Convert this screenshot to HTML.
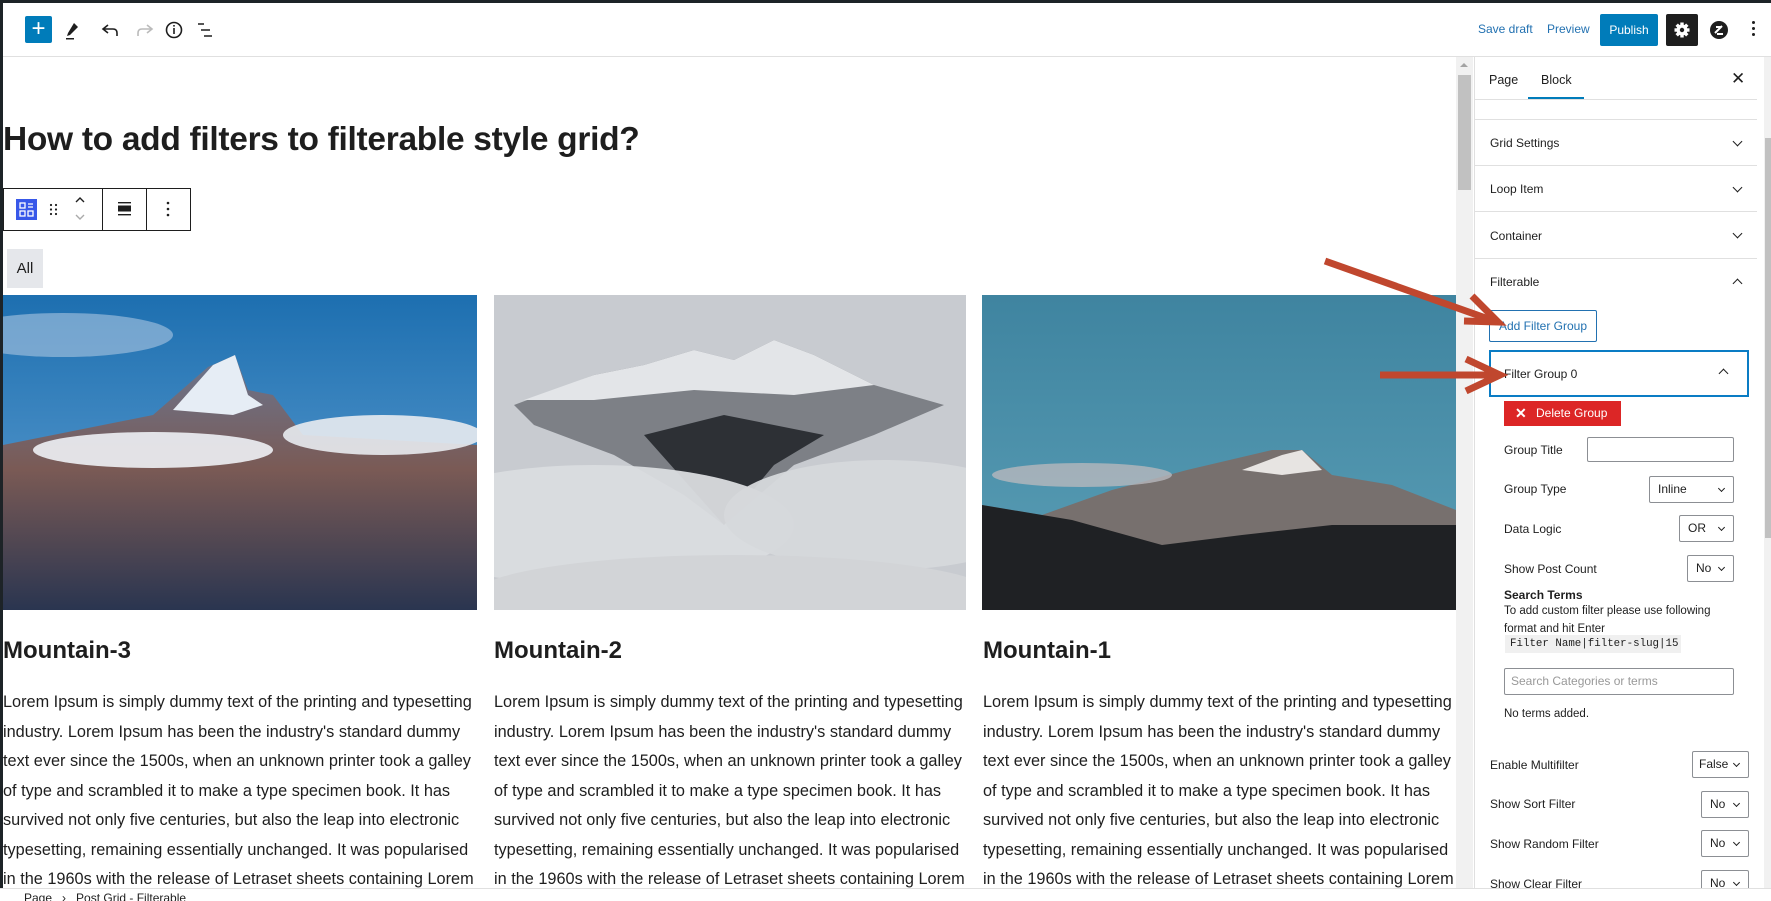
<!DOCTYPE html>
<html><head><meta charset="utf-8"><style>
*{box-sizing:border-box;margin:0;padding:0}
body{width:1771px;height:901px;overflow:hidden;background:#fff;font-family:"Liberation Sans",sans-serif;color:#1e1e1e;position:relative}
.a{position:absolute}
.top{left:0;top:0;width:1771px;height:3px;background:#1d2327}
.hdr{left:0;top:3px;width:1771px;height:54px;border-bottom:1px solid #e0e0e0;background:#fff}
.side{left:1474px;top:57px;width:290px;height:831px;border-left:1px solid #e0e0e0;background:#fff;font-size:12px}
.row{position:absolute;left:0;width:282px;border-top:1px solid #e0e0e0}
.lbl{position:absolute;font-size:12px;color:#1e1e1e;white-space:nowrap}
.sel{position:absolute;border:1px solid #8c8f94;border-radius:2px;background:#fff;font-size:12px;padding-left:8px;line-height:25px;height:27px}
.sel:after{content:"";position:absolute;right:9px;top:9px;width:4px;height:4px;border-right:1.5px solid #1e1e1e;border-bottom:1.5px solid #1e1e1e;transform:rotate(45deg)}
.chev{position:absolute;width:7px;height:7px;border-right:1.6px solid #1e1e1e;border-bottom:1.6px solid #1e1e1e;transform:rotate(45deg)}
.chevu{position:absolute;width:7px;height:7px;border-left:1.6px solid #1e1e1e;border-top:1.6px solid #1e1e1e;transform:rotate(45deg)}
.col p{font-size:16.3px;line-height:29.5px;white-space:nowrap;color:#1e1e1e}
.col h2{font-size:24px;font-weight:bold;margin:0}
</style></head><body>
<div class="a top"></div>
<div class="a hdr"></div>
<div class="a" style="left:25px;top:16px;width:27px;height:27px;background:#007cba;border-radius:2px;color:#fff;font-size:24px;line-height:26px;text-align:center">+</div>
<svg class="a" style="left:60px;top:16px" width="160" height="28" viewBox="0 0 160 28">
<path d="M14 7 L18 11 L10 19 L7 20 L8 17 Z" fill="#1e1e1e"/><rect x="6" y="22" width="8" height="1.5" fill="#1e1e1e"/>
<path d="M48 9 L43 13 L48 17 M43 13 H53 Q57 13 57 17 V20" fill="none" stroke="#1e1e1e" stroke-width="1.6"/>
<path d="M87 9 L92 13 L87 17 M92 13 H82 Q78 13 78 17 V20" fill="none" stroke="#bbb" stroke-width="1.6"/>
<circle cx="114" cy="14" r="7.5" fill="none" stroke="#1e1e1e" stroke-width="1.6"/><rect x="113.2" y="12" width="1.6" height="6" fill="#1e1e1e"/><rect x="113.2" y="9" width="1.6" height="1.6" fill="#1e1e1e"/>
<path d="M138 8 H144 M141 14 H150 M144 20 H152" stroke="#1e1e1e" stroke-width="1.6"/>
</svg>
<div class="a" style="left:1478px;top:22px;font-size:12px;color:#2271b1">Save draft</div>
<div class="a" style="left:1547px;top:22px;font-size:12px;color:#2271b1">Preview</div>
<div class="a" style="left:1600px;top:14px;width:58px;height:32px;background:#007cba;border-radius:2px;color:#fff;font-size:12px;line-height:32px;text-align:center">Publish</div>
<div class="a" style="left:1666px;top:14px;width:32px;height:32px;background:#1e1e1e;border-radius:2px"></div>
<svg class="a" style="left:1672px;top:20px" width="20" height="20" viewBox="0 0 20 20"><g fill="#fff"><circle cx="10" cy="10" r="5.5"/><rect x="8.3" y="2.5" width="3.4" height="15"/><rect x="2.5" y="8.3" width="15" height="3.4"/><rect x="8.3" y="2.5" width="3.4" height="15" transform="rotate(45 10 10)"/><rect x="8.3" y="2.5" width="3.4" height="15" transform="rotate(-45 10 10)"/></g><circle cx="10" cy="10" r="2.2" fill="#1e1e1e"/></svg>
<svg class="a" style="left:1709px;top:20px" width="20" height="20" viewBox="0 0 20 20"><circle cx="10" cy="10" r="9" fill="#1e1e1e"/><path d="M6 13 L13 6 M7 7 H12 M8 14 H14" stroke="#fff" stroke-width="2"/></svg>
<div class="a" style="left:1752px;top:21px;width:3px;height:3px;background:#1e1e1e;border-radius:2px;box-shadow:0 6px 0 #1e1e1e,0 12px 0 #1e1e1e"></div>

<!-- content -->
<div class="a" style="left:3px;top:121px;font-size:33.5px;font-weight:bold;white-space:nowrap;letter-spacing:-0.3px">How to add filters to filterable style grid?</div>
<div class="a" style="left:3px;top:188px;width:188px;height:43px;border:1px solid #1e1e1e;background:#fff"></div>
<div class="a" style="left:102px;top:189px;width:1px;height:41px;background:#1e1e1e"></div>
<div class="a" style="left:146px;top:189px;width:1px;height:41px;background:#1e1e1e"></div>
<svg class="a" style="left:0;top:188px" width="191" height="43" viewBox="0 0 191 43">
<rect x="16" y="11" width="21" height="21" fill="#3858e9"/><g fill="none" stroke="#fff" stroke-width="1.3"><rect x="20" y="15" width="5" height="5"/><rect x="20" y="23" width="5" height="5"/><rect x="28" y="23" width="5" height="5"/><path d="M28 16H33M28 19H33"/></g>
<g fill="#1e1e1e"><circle cx="51" cy="17" r="1.1"/><circle cx="51" cy="21.5" r="1.1"/><circle cx="51" cy="26" r="1.1"/><circle cx="56" cy="17" r="1.1"/><circle cx="56" cy="21.5" r="1.1"/><circle cx="56" cy="26" r="1.1"/></g>
<path d="M76 14 L80 10 L84 14" fill="none" stroke="#1e1e1e" stroke-width="1.4"/><path d="M76 27 L80 31 L84 27" fill="none" stroke="#aaa" stroke-width="1.4"/>
<rect x="118" y="14" width="13" height="1.4" fill="#1e1e1e"/><rect x="118" y="17.5" width="13" height="6" fill="#1e1e1e"/><rect x="118" y="26" width="13" height="1.4" fill="#1e1e1e"/>
<g fill="#1e1e1e"><circle cx="168" cy="15" r="1.3"/><circle cx="168" cy="21" r="1.3"/><circle cx="168" cy="27" r="1.3"/></g>
</svg>
<div class="a" style="left:7px;top:249px;width:36px;height:39px;background:#e5e7eb;font-size:15px;line-height:39px;text-align:center;color:#1e1e1e">All</div>

<!-- images -->
<svg class="a" style="left:3px;top:295px" width="474" height="315" viewBox="0 0 474 315" preserveAspectRatio="none">
<defs><linearGradient id="s1" x1="0" y1="0" x2="0" y2="1"><stop offset="0" stop-color="#1d6fb0"/><stop offset="1" stop-color="#6aa6d6"/></linearGradient><linearGradient id="m1" x1="0" y1="0" x2="0" y2="1"><stop offset="0" stop-color="#6a7690"/><stop offset="0.45" stop-color="#7a5a55"/><stop offset="1" stop-color="#2a3550"/></linearGradient></defs>
<rect width="474" height="315" fill="url(#s1)"/>
<ellipse cx="60" cy="40" rx="110" ry="22" fill="#b8cde6" opacity=".55"/>
<polygon points="150,120 205,72 232,60 245,95 270,100 300,140 474,150 474,315 0,315 0,150" fill="url(#m1)"/>
<polygon points="170,115 210,70 232,60 245,100 260,110 230,120" fill="#e6edf5"/>
<ellipse cx="150" cy="155" rx="120" ry="18" fill="#eef1f5" opacity=".9"/><ellipse cx="380" cy="140" rx="100" ry="20" fill="#e8ebf0" opacity=".9"/>
</svg>
<svg class="a" style="left:494px;top:295px" width="472" height="315" viewBox="0 0 472 315" preserveAspectRatio="none">
<rect width="472" height="315" fill="#c8cbd0"/>
<polygon points="20,110 100,80 150,70 200,55 240,65 280,45 320,60 380,90 450,110 380,140 300,170 230,230 190,200 120,160 40,130" fill="#7d8086"/>
<polygon points="30,105 100,80 150,70 200,55 240,65 280,45 320,60 380,90 300,100 200,95 100,105" fill="#e3e5e8"/>
<polygon points="150,140 230,230 280,170 330,140 230,120" fill="#2d3035"/>
<ellipse cx="100" cy="230" rx="200" ry="60" fill="#dadcdf" opacity=".95"/><ellipse cx="390" cy="220" rx="160" ry="55" fill="#d6d8db" opacity=".95"/><ellipse cx="240" cy="300" rx="260" ry="40" fill="#d2d4d7"/>
</svg>
<svg class="a" style="left:982px;top:295px" width="474" height="315" viewBox="0 0 474 315" preserveAspectRatio="none">
<defs><linearGradient id="s3" x1="0" y1="0" x2="0" y2="1"><stop offset="0" stop-color="#3f84a0"/><stop offset="1" stop-color="#5b9fb6"/></linearGradient></defs>
<rect width="474" height="315" fill="url(#s3)"/>
<polygon points="60,220 130,195 205,175 290,155 320,155 350,180 410,190 474,215 474,315 0,315 0,210" fill="#77706e"/>
<polygon points="260,175 300,160 320,155 340,175 300,180" fill="#e7e4e2"/>
<polygon points="0,210 90,225 180,250 260,240 350,230 474,230 474,315 0,315" fill="#1f2124"/>
<ellipse cx="100" cy="180" rx="90" ry="12" fill="#b6b8bd" opacity=".8"/>
</svg>

<div class="a col" style="left:3px;top:637px"><h2>Mountain-3</h2></div>
<div class="a col" style="left:494px;top:637px"><h2>Mountain-2</h2></div>
<div class="a col" style="left:983px;top:637px"><h2>Mountain-1</h2></div>
<div class="a col" style="left:3px;top:688px"><p>Lorem Ipsum is simply dummy text of the printing and typesetting<br>industry. Lorem Ipsum has been the industry's standard dummy<br>text ever since the 1500s, when an unknown printer took a galley<br>of type and scrambled it to make a type specimen book. It has<br>survived not only five centuries, but also the leap into electronic<br>typesetting, remaining essentially unchanged. It was popularised<br>in the 1960s with the release of Letraset sheets containing Lorem</p></div>
<div class="a col" style="left:494px;top:688px"><p>Lorem Ipsum is simply dummy text of the printing and typesetting<br>industry. Lorem Ipsum has been the industry's standard dummy<br>text ever since the 1500s, when an unknown printer took a galley<br>of type and scrambled it to make a type specimen book. It has<br>survived not only five centuries, but also the leap into electronic<br>typesetting, remaining essentially unchanged. It was popularised<br>in the 1960s with the release of Letraset sheets containing Lorem</p></div>
<div class="a col" style="left:983px;top:688px"><p>Lorem Ipsum is simply dummy text of the printing and typesetting<br>industry. Lorem Ipsum has been the industry's standard dummy<br>text ever since the 1500s, when an unknown printer took a galley<br>of type and scrambled it to make a type specimen book. It has<br>survived not only five centuries, but also the leap into electronic<br>typesetting, remaining essentially unchanged. It was popularised<br>in the 1960s with the release of Letraset sheets containing Lorem</p></div>

<!-- main scrollbar -->
<div class="a" style="left:1456px;top:57px;width:17px;height:831px;background:#f1f1f1"></div>
<div class="a" style="left:1458px;top:75px;width:13px;height:115px;background:#c1c1c1"></div>
<div class="a" style="left:1460px;top:63px;width:0;height:0;border-left:4px solid transparent;border-right:4px solid transparent;border-bottom:4px solid #a3a3a3"></div>

<!-- sidebar -->
<div class="a side">
<div class="lbl" style="left:14px;top:16px;font-size:12.5px">Page</div>
<div class="lbl" style="left:66px;top:16px;font-size:12.5px">Block</div>
<div style="position:absolute;left:53px;top:40px;width:56px;height:2px;background:#007cba"></div>
<div style="position:absolute;left:256px;top:15px;font-size:17px;line-height:14px">✕</div>
<div class="row" style="top:42px"></div>
<div class="row" style="top:62px"></div>
<div class="lbl" style="left:15px;top:79px">Grid Settings</div><div class="chev" style="left:259px;top:81px"></div>
<div class="row" style="top:108px"></div>
<div class="lbl" style="left:15px;top:125px">Loop Item</div><div class="chev" style="left:259px;top:127px"></div>
<div class="row" style="top:154px"></div>
<div class="lbl" style="left:15px;top:172px">Container</div><div class="chev" style="left:259px;top:173px"></div>
<div class="row" style="top:201px"></div>
<div class="lbl" style="left:15px;top:218px">Filterable</div><div class="chevu" style="left:259px;top:223px"></div>
<div style="position:absolute;left:14px;top:253px;width:108px;height:32px;border:1px solid #2271b1;border-radius:2px;color:#2271b1;font-size:12px;line-height:30px;text-align:center">Add Filter Group</div>
<div style="position:absolute;left:14px;top:293px;width:260px;height:47px;border:2px solid #0a7cc4"></div>
<div class="lbl" style="left:29px;top:310px">Filter Group 0</div><div class="chevu" style="left:245px;top:313px"></div>
<div style="position:absolute;left:29px;top:344px;width:117px;height:25px;background:#dc2626;color:#fff;font-size:12px;line-height:25px;padding-left:32px">Delete Group</div>
<div style="position:absolute;left:40px;top:348px;color:#fff;font-size:14px;font-weight:bold">✕</div>
<div class="lbl" style="left:29px;top:386px">Group Title</div>
<div style="position:absolute;left:112px;top:380px;width:147px;height:25px;border:1px solid #8c8f94;border-radius:2px"></div>
<div class="lbl" style="left:29px;top:425px">Group Type</div><div class="sel" style="left:174px;top:419px;width:85px">Inline</div>
<div class="lbl" style="left:29px;top:465px">Data Logic</div><div class="sel" style="left:204px;top:458px;width:55px">OR</div>
<div class="lbl" style="left:29px;top:505px">Show Post Count</div><div class="sel" style="left:212px;top:498px;width:47px">No</div>
<div class="lbl" style="left:29px;top:531px;font-weight:bold">Search Terms</div>
<div class="lbl" style="left:29px;top:548px;font-size:11.5px">To add custom filter please use following</div>
<div class="lbl" style="left:29px;top:566px;font-size:11.5px">format and hit Enter</div>
<div style="position:absolute;left:30px;top:578px;width:176px;height:18px;background:#f0f0f0;font-family:'Liberation Mono',monospace;font-size:10.8px;line-height:18px;padding-left:5px;white-space:nowrap;overflow:hidden">Filter Name|filter-slug|15</div>
<div style="position:absolute;left:29px;top:611px;width:230px;height:27px;border:1px solid #8c8f94;border-radius:2px;color:#999;font-size:12px;line-height:25px;padding-left:6px">Search Categories or terms</div>
<div class="lbl" style="left:29px;top:651px;font-size:11.5px">No terms added.</div>
<div class="lbl" style="left:15px;top:701px">Enable Multifilter</div><div class="sel" style="left:217px;top:694px;width:57px;padding-left:6px">False</div>
<div class="lbl" style="left:15px;top:740px">Show Sort Filter</div><div class="sel" style="left:226px;top:734px;width:48px">No</div>
<div class="lbl" style="left:15px;top:780px">Show Random Filter</div><div class="sel" style="left:226px;top:773px;width:48px">No</div>
<div class="lbl" style="left:15px;top:820px">Show Clear Filter</div><div class="sel" style="left:226px;top:813px;width:48px">No</div>
</div>
<div class="a" style="left:1764px;top:57px;width:7px;height:831px;background:#f1f1f1"></div>
<div class="a" style="left:1765px;top:138px;width:6px;height:400px;background:#c1c1c1"></div>

<!-- footer -->
<div class="a" style="left:0;top:888px;width:1771px;height:13px;background:#fff;border-top:1px solid #e0e0e0;overflow:hidden">
<div style="position:absolute;left:24px;top:2px;font-size:12px;color:#1e1e1e;white-space:nowrap">Page &nbsp;&nbsp;›&nbsp;&nbsp; Post Grid - Filterable</div></div>
<div class="a" style="left:0;top:3px;width:3px;height:885px;background:#1d2327"></div>

<!-- arrows -->
<svg class="a" style="left:0;top:0" width="1771" height="901" viewBox="0 0 1771 901">
<g stroke="#c0472e" stroke-width="7" fill="none" stroke-linecap="butt">
<path d="M1325 261 L1497 322"/><path d="M1472 296 L1498 322 L1464 321"/>
<path d="M1380 375 L1500 375"/><path d="M1466 359 L1500 375 L1466 391"/>
</g></svg>
</body></html>
